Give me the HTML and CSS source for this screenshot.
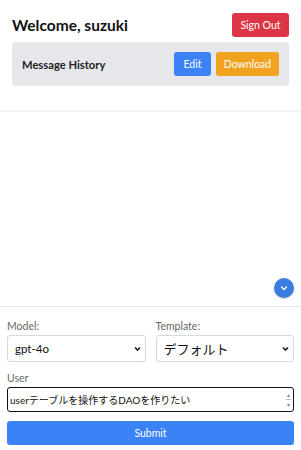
FILE: index.html
```html
<!DOCTYPE html>
<html lang="ja">
<head>
<meta charset="utf-8">
<link rel="stylesheet" href="styles.css">
</head>
<body>
<div class="app">
  <header class="header">
    <div class="title-row">
      <h1 class="title">Welcome, suzuki</h1>
      <button class="btn btn-red">Sign Out</button>
    </div>
    <div class="history">
      <span class="history-title">Message History</span>
      <div class="history-actions">
        <button class="btn btn-blue">Edit</button>
        <button class="btn btn-orange">Download</button>
      </div>
    </div>
  </header>
  <main class="chat">
    <button class="scroll-btn" aria-label="scroll down">
      <svg width="10" height="10" viewBox="0 0 10 10"><path d="M2.5 4 L5 6.5 L7.5 4" fill="none" stroke="#fff" stroke-width="1.2" stroke-linecap="round" stroke-linejoin="round"/></svg>
    </button>
  </main>
  <footer class="footer">
    <div class="selects">
      <div class="field">
        <label class="label">Model:</label>
        <div class="select"><span>gpt-4o</span><svg width="9" height="8" viewBox="0 0 9 8"><path d="M2 2.5 L4.5 5 L7 2.5" fill="none" stroke="#222" stroke-width="1.7"/></svg></div>
      </div>
      <div class="field">
        <label class="label">Template:</label>
        <div class="select"><span class="jp">デフォルト</span><svg width="9" height="8" viewBox="0 0 9 8"><path d="M2 2.5 L4.5 5 L7 2.5" fill="none" stroke="#222" stroke-width="1.7"/></svg></div>
      </div>
    </div>
    <label class="label user-label">User</label>
    <div class="textarea">
      <span>userテーブルを操作するDAOを作りたい</span>
      <div class="spin"><span>▴</span><span class="spin-mid"></span><span>▾</span></div>
    </div>
    <button class="btn btn-blue submit">Submit</button>
  </footer>
</div>
</body>
</html>
```

FILE: styles.css
```css
* { box-sizing: border-box; }
html, body { margin: 0; padding: 0; }
body {
  font-family: Lato, "Noto Sans CJK JP", sans-serif;
  color: #111;
  background: #fff;
  width: 301px;
  height: 450px;
  overflow: hidden;
}
.app {
  height: 450px;
  display: flex;
  flex-direction: column;
}
.header {
  padding: 13px 12px 24px 12px;
  box-shadow: 0 1px 2px rgba(0,0,0,0.10);
  position: relative;
  z-index: 1;
}
.title-row {
  display: flex;
  justify-content: space-between;
  align-items: center;
  height: 24px;
  margin-bottom: 5px;
}
.title {
  margin: 0;
  font-size: 15.5px;
  font-weight: 700;
  color: #111;
}
.btn {
  border: none;
  font-family: Lato, sans-serif;
  font-size: 10.5px;
  color: #fff;
  border-radius: 3px;
  height: 24px;
  padding: 0;
  white-space: nowrap;
  cursor: pointer;
}
.btn-red { background: #dc3545; width: 57px; }
.btn-blue { background: #3b82f6; }
.btn-orange { background: #f2a21e; }
.history {
  background: #e5e7eb;
  border-radius: 3px;
  height: 44px;
  display: flex;
  align-items: center;
  justify-content: space-between;
  padding: 0 10px;
}
.history-title {
  font-size: 11.2px;
  font-weight: 700;
  color: #222;
}
.history-actions {
  display: flex;
  gap: 5px;
}
.history-actions .btn-blue { width: 37px; }
.history-actions .btn-orange { width: 63px; }
.chat {
  flex: 1;
  position: relative;
}
.scroll-btn {
  position: absolute;
  right: 7px;
  bottom: 8px;
  width: 20px;
  height: 20px;
  border-radius: 50%;
  border: none;
  background: #3b7ce0;
  display: flex;
  align-items: center;
  justify-content: center;
  padding: 0;
  box-shadow: 0 1px 2px rgba(0,0,0,0.2);
}
.footer {
  border-top: 1px solid #e8e8e8;
  padding: 12px 7px 5px 7px;
  display: flex;
  flex-direction: column;
}
.selects {
  display: flex;
  gap: 10px;
}
.field { flex: 1; display: flex; flex-direction: column; }
.label {
  font-size: 10.5px;
  color: #666;
  line-height: 14px;
  margin-bottom: 2px;
}
.select {
  height: 27px;
  border: 1px solid #d9d9d9;
  border-radius: 3px;
  display: flex;
  align-items: center;
  justify-content: space-between;
  padding: 0 3px 0 7px;
  font-size: 11.5px;
  color: #111;
}
.select .jp { font-size: 13px; }
.user-label { margin-top: 9px; }
.textarea {
  height: 25px;
  border: 1.5px solid #111;
  border-radius: 3px;
  display: flex;
  align-items: center;
  justify-content: space-between;
  padding: 0 2px 0 2px;
  font-size: 10px;
  color: #111;
}
.spin {
  display: flex;
  flex-direction: column;
  align-items: center;
  font-size: 6px;
  line-height: 7px;
  color: #888;
}
.spin-mid {
  width: 5px;
  height: 1px;
  background: #bbb;
  margin: 1px 0;
}
.submit {
  margin-top: 9px;
  width: 100%;
  height: 24px;
}
```
